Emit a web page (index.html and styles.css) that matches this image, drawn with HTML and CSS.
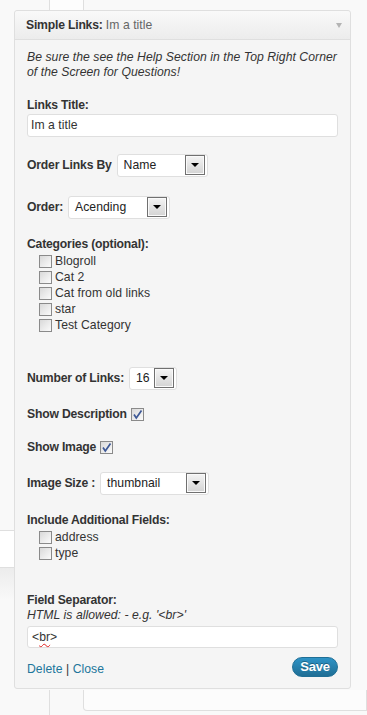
FILE: index.html
```html
<!DOCTYPE html>
<html>
<head>
<meta charset="utf-8">
<link rel="stylesheet" href="styles.css">
</head>
<body>
<div class="bg-top"></div>
<div class="bg-left-row"></div>
<div class="bg-left-head"></div>
<div class="bg-bottom-line"></div>
<div class="bg-bottom-box"></div>

<div class="page">
  <div class="widget">
    <div class="widget-top">
      <h4 class="widget-title">Simple Links: <span class="in-title">Im a title</span></h4>
      <span class="widget-arrow"></span>
    </div>
    <div class="widget-body">
      <p class="help">Be sure the see the Help Section in the Top Right Corner of the Screen for Questions!</p>

      <div class="block mt18">
        <label class="lbl">Links Title:</label>
        <div class="text-input mt1">Im a title</div>
      </div>

      <div class="row mt17">
        <label class="lbl">Order Links By</label>
        <div class="select w91"><span class="sel-text">Name</span><span class="sel-btn"><i></i></span></div>
      </div>

      <div class="row mt19">
        <label class="lbl">Order:</label>
        <div class="select w102"><span class="sel-text">Acending</span><span class="sel-btn"><i></i></span></div>
      </div>

      <div class="block mt18">
        <label class="lbl">Categories (optional):</label>
        <ul class="checks">
          <li><span class="cb"></span>Blogroll</li>
          <li><span class="cb"></span>Cat 2</li>
          <li><span class="cb"></span>Cat from old links</li>
          <li><span class="cb"></span>star</li>
          <li><span class="cb"></span>Test Category</li>
        </ul>
      </div>

      <div class="row mt34">
        <label class="lbl">Number of Links:</label>
        <div class="select w48"><span class="sel-text">16</span><span class="sel-btn"><i></i></span></div>
      </div>

      <div class="inline-check mt17">
        <label class="lbl">Show Description</label>
        <span class="cb checked"><svg width="11" height="11" viewBox="0 0 11 11"><path d="M2 5.5 L4.3 9 L9.5 1.5" fill="none" stroke="#3d5896" stroke-width="1.7"/></svg></span>
      </div>

      <div class="inline-check mt18">
        <label class="lbl">Show Image</label>
        <span class="cb checked"><svg width="11" height="11" viewBox="0 0 11 11"><path d="M2 5.5 L4.3 9 L9.5 1.5" fill="none" stroke="#3d5896" stroke-width="1.7"/></svg></span>
      </div>

      <div class="row mt17">
        <label class="lbl">Image Size :</label>
        <div class="select w109"><span class="sel-text">thumbnail</span><span class="sel-btn"><i></i></span></div>
      </div>

      <div class="block mt18">
        <label class="lbl">Include Additional Fields:</label>
        <ul class="checks">
          <li><span class="cb"></span>address</li>
          <li><span class="cb"></span>type</li>
        </ul>
      </div>

      <div class="block mt32">
        <label class="lbl">Field Separator:</label>
        <div class="note">HTML is allowed: - e.g. '&lt;br&gt;'</div>
        <div class="text-input sep mt3">&lt;<span class="squiggle">br</span>&gt;</div>
      </div>

      <div class="actions">
        <div class="links"><a class="link">Delete</a> | <a class="link">Close</a></div>
        <button class="save">Save</button>
      </div>
    </div>
  </div>
</div>
</body>
</html>
```
FILE: styles.css
```css
html, body {
  margin: 0;
  padding: 0;
}
body {
  background: #f9f9f9;
  font-family: "Liberation Sans", Arial, sans-serif;
  font-size: 12.2px;
  letter-spacing: 0.05px;
  line-height: 15px;
  color: #333;
  position: relative;
  height: 715px;
  overflow: hidden;
}

/* background page decorations (partly hidden behind widget) */
.bg-top {
  position: absolute;
  left: 49px;
  top: 0;
  width: 33px;
  height: 10px;
  border-left: 1px solid #dfdfdf;
  border-right: 1px solid #dfdfdf;
  background: #fdfdfd;
}
.bg-left-row {
  position: absolute;
  left: 0;
  top: 530px;
  width: 14px;
  height: 36px;
  border-top: 1px solid #dfdfdf;
  border-bottom: 1px solid #dfdfdf;
  background: #fff;
}
.bg-left-head {
  position: absolute;
  left: 0;
  top: 568px;
  width: 14px;
  height: 32px;
  background: linear-gradient(#ececec, #f9f9f9);
}
.bg-bottom-line {
  position: absolute;
  left: 49px;
  top: 690px;
  width: 1px;
  height: 25px;
  background: #dfdfdf;
}
.bg-bottom-box {
  position: absolute;
  left: 83px;
  top: 690px;
  right: 0;
  height: 20px;
  border: 1px solid #dfdfdf;
  border-top: none;
  border-bottom-left-radius: 4px;
  background: #fcfcfc;
}

.page {
  position: relative;
  padding: 10px 0 0 14px;
}

.widget {
  width: 337px;
  box-sizing: border-box;
  border: 1px solid #dfdfdf;
  border-radius: 3px;
  background: #f5f5f5;
}
.widget-top {
  height: 28px;
  border-bottom: 1px solid #dfdfdf;
  border-radius: 3px 3px 0 0;
  background: linear-gradient(#f9f9f9, #ececec);
  display: flex;
  align-items: center;
  justify-content: space-between;
  padding: 0 8px 0 11px;
}
.widget-title {
  margin: 0;
  font-size: 12.2px;
  font-weight: bold;
  letter-spacing: -0.2px;
  color: #333;
}
.in-title {
  font-weight: normal;
  letter-spacing: 0.05px;
  color: #666;
}
.widget-arrow {
  width: 0;
  height: 0;
  border-left: 3.5px solid transparent;
  border-right: 3.5px solid transparent;
  border-top: 5px solid #b4b4b4;
  margin-top: 1px;
}

.widget-body {
  padding: 10px 12px 11px 12px;
}
.help {
  margin: 0;
  font-style: italic;
}

.mt1 { margin-top: 1px; }
.mt3 { margin-top: 3px; }
.mt17 { margin-top: 17px; }
.mt18 { margin-top: 18px; }
.mt19 { margin-top: 19px; }
.mt32 { margin-top: 32px; }
.mt34 { margin-top: 34px; }

.lbl {
  font-weight: bold;
  letter-spacing: -0.2px;
  display: block;
}
.row {
  display: flex;
  align-items: center;
}
.row .select {
  margin-left: 5px;
}

.text-input {
  box-sizing: border-box;
  height: 23px;
  border: 1px solid #dfdfdf;
  border-radius: 3px;
  background: #fff;
  padding: 0 3px;
  display: flex;
  align-items: center;
  color: #333;
}
.text-input.sep {
  padding-left: 4px;
  height: 22px;
}
.squiggle {
  text-decoration: underline wavy #e02020;
  text-decoration-thickness: 1px;
  text-underline-offset: 2px;
}

.select {
  box-sizing: border-box;
  height: 23px;
  border: 1px solid #dfdfdf;
  border-radius: 3px;
  background: #fff;
  display: flex;
  align-items: flex-start;
  justify-content: space-between;
  padding: 0 2px 0 6px;
  color: #222;
}
.sel-text {
  line-height: 21px;
}
.sel-btn {
  box-sizing: border-box;
  width: 20px;
  height: 20px;
  border: 1px solid #707070;
  background: linear-gradient(#f4f4f4, #d3d3d3);
  box-shadow: inset 0 0 0 1px #fafafa;
  display: flex;
  align-items: center;
  justify-content: center;
}
.sel-btn i {
  width: 0;
  height: 0;
  border-left: 4px solid transparent;
  border-right: 4px solid transparent;
  border-top: 4px solid #000;
}
.w48 { width: 48px; }
.w91 { width: 91px; }
.w102 { width: 102px; }
.w109 { width: 109px; }

.checks {
  list-style: none;
  margin: 1px 0 0 0;
  padding: 0 0 0 12px;
}
.checks li {
  height: 16px;
  display: flex;
  align-items: center;
}
.cb {
  box-sizing: border-box;
  width: 13px;
  height: 13px;
  border: 1px solid #8a8a8a;
  background: linear-gradient(135deg, #d9d9d9, #fbfbfb);
  margin-right: 3px;
  flex: none;
  display: flex;
  align-items: center;
  justify-content: center;
}
.inline-check {
  display: flex;
  align-items: center;
  height: 15px;
}
.inline-check .cb {
  margin-left: 4px;
}

.note {
  font-style: italic;
}

.actions {
  margin-top: 9px;
  display: flex;
  justify-content: space-between;
  align-items: flex-end;
  height: 20px;
}
.links {
  line-height: 15px;
  color: #333;
}
.link {
  color: #21759b;
  text-decoration: none;
}
.save {
  box-sizing: border-box;
  width: 46px;
  height: 20px;
  border: 1px solid #1f6f96;
  border-radius: 10px;
  background: linear-gradient(#2e93c6, #1f6e95);
  color: #fff;
  font-family: "Liberation Sans", Arial, sans-serif;
  font-weight: bold;
  font-size: 13px;
  letter-spacing: -0.2px;
  line-height: 16px;
  padding: 0;
  text-shadow: 0 -1px 0 rgba(0,0,0,0.3);
  align-self: flex-start;
}
```
